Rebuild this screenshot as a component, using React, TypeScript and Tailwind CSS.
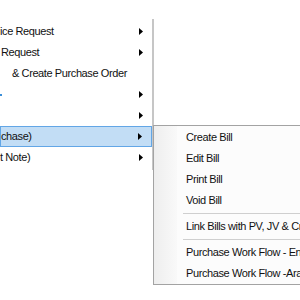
import React from "react";

const Arrow = () => (
  <svg width="4" height="7" viewBox="0 0 4 7" className="block">
    <path d="M0 0L4 3.5L0 7Z" fill="#000" />
  </svg>
);

type Row = { text: React.ReactNode; pl: string; arrow: boolean; active?: boolean };

const leftRows: Row[] = [
  { text: "ice Request", pl: "pl-0", arrow: true },
  { text: "Request", pl: "pl-[1px]", arrow: true },
  { text: "& Create Purchase Order", pl: "pl-[12px]", arrow: false },
  {
    text: <span className="mt-[1px] block h-[2px] w-[2px] bg-[#3b8fd9]" />,
    pl: "pl-0",
    arrow: true,
  },
  { text: "", pl: "pl-0", arrow: true },
  { text: "chase)", pl: "pl-0", arrow: true, active: true },
  { text: "t Note)", pl: "pl-0", arrow: true },
];

export default function App() {
  return (
    <div className="relative h-[300px] w-[300px] overflow-hidden bg-white font-['Liberation_Sans',Arial,sans-serif] text-[11px] tracking-[-0.4px] text-[#111]">
      {/* parent menu */}
      <div className="mt-[19px] flex w-[154px] flex-col border-r-2 border-[#c6c6c6] bg-white pt-[2px] pb-[2px]">
        {leftRows.map((r, i) => (
          <div
            key={i}
            className={
              "flex h-[21px] items-center justify-between pr-[9px] " +
              r.pl +
              (r.active ? " border border-[#62a6e6] bg-[#c2ddf5] pr-[8px]" : "")
            }
          >
            <span className="whitespace-nowrap">{r.text}</span>
            {r.arrow && <Arrow />}
          </div>
        ))}
      </div>

      {/* submenu */}
      <div className="absolute left-[153px] top-[125px] flex h-[160px] w-[200px] border border-[#a3a3a3] bg-[#fcfcfc]">
        <div className="w-[23px] shrink-0 bg-gradient-to-r from-[#eeeeee] to-[#f9f9f9]" />
        <div className="flex flex-1 flex-col pt-[1px]">
          {["Create Bill", "Edit Bill", "Print Bill", "Void Bill"].map((t) => (
            <div key={t} className="flex h-[21px] items-center whitespace-nowrap pl-[9px]">
              {t}
            </div>
          ))}
          <div className="flex h-[5px] items-center pl-[6px]">
            <div className="h-px w-full bg-[#cfcfcf]" />
          </div>
          <div className="flex h-[21px] items-center whitespace-nowrap pl-[9px]">
            Link Bills with PV, JV &amp; Credit Note
          </div>
          <div className="flex h-[5px] items-center pl-[6px]">
            <div className="h-px w-full bg-[#cfcfcf]" />
          </div>
          <div className="flex h-[21px] items-center whitespace-nowrap pl-[9px]">
            Purchase Work Flow - English
          </div>
          <div className="flex h-[21px] items-center whitespace-nowrap pl-[9px]">
            Purchase Work Flow -Arabic
          </div>
        </div>
      </div>
    </div>
  );
}
